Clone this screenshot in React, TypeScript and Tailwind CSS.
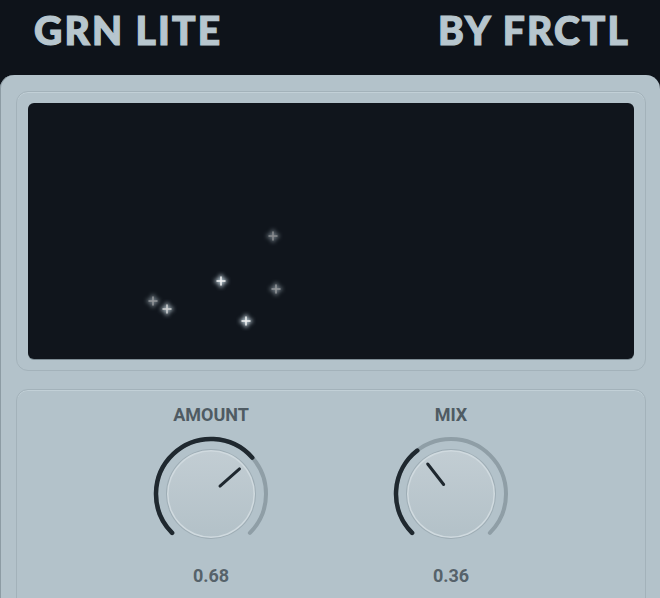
import React from "react";

const polar = (cx: number, cy: number, r: number, deg: number) => {
  const a = (deg * Math.PI) / 180;
  return [cx + r * Math.sin(a), cy - r * Math.cos(a)];
};

const arcPath = (cx: number, cy: number, r: number, from: number, to: number) => {
  const [x1, y1] = polar(cx, cy, r, from);
  const [x2, y2] = polar(cx, cy, r, to);
  const large = to - from > 180 ? 1 : 0;
  return `M ${x1} ${y1} A ${r} ${r} 0 ${large} 1 ${x2} ${y2}`;
};

function Knob({ label, value, id }: { label: string; value: number; id: string }) {
  const cx = 60;
  const cy = 60;
  const ang = -135 + value * 270;
  const [px1, py1] = polar(cx, cy, 12, ang);
  const [px2, py2] = polar(cx, cy, 38, ang);
  return (
    <div className="w-[240px] flex flex-col items-center">
      <div
        className="text-[18px] leading-[20px] font-bold text-[#4f5b63]"
        style={{ fontFamily: "Roboto, 'Liberation Sans', sans-serif" }}
      >
        {label}
      </div>
      <svg width="120" height="120" viewBox="0 0 120 120" className="mt-[9px]">
        <defs>
          <linearGradient id={`kg-${id}`} x1="0" y1="0" x2="0" y2="1">
            <stop offset="0" stopColor="#c2cdd3" />
            <stop offset="1" stopColor="#b3c1c8" />
          </linearGradient>
        </defs>
        <path d={arcPath(cx, cy, 55, -135, 135)} fill="none" stroke="#8f9ea6" strokeWidth="4" strokeLinecap="round" />
        <path d={arcPath(cx, cy, 55, -135, ang)} fill="none" stroke="#1f282f" strokeWidth="4.5" strokeLinecap="round" />
        <circle cx={cx} cy={cy} r="45" fill="#9eadb5" />
        <circle cx={cx} cy={cy} r="44" fill="#d0dadf" />
        <circle cx={cx} cy={cy} r="42.5" fill={`url(#kg-${id})`} />
        <line x1={px1} y1={py1} x2={px2} y2={py2} stroke="#1f282f" strokeWidth="3" strokeLinecap="round" />
      </svg>
      <div
        className="mt-[12px] text-[18px] leading-[20px] font-bold text-[#56626a]"
        style={{ fontFamily: "Roboto, 'Liberation Sans', sans-serif" }}
      >
        {value.toFixed(2)}
      </div>
    </div>
  );
}

const stars = [
  { x: 125, y: 198, o: 0.55 },
  { x: 139, y: 206, o: 0.8 },
  { x: 193, y: 178, o: 0.95 },
  { x: 245, y: 133, o: 0.5 },
  { x: 248, y: 186, o: 0.55 },
  { x: 218, y: 218, o: 0.95 },
];

export default function App() {
  return (
    <div className="w-[660px] h-[598px] overflow-hidden bg-[#0e131a] flex flex-col">
      <div
        className="h-[75px] shrink-0 pb-[14px] flex items-center justify-between pl-[34px] pr-[30px] text-[#b7c6ce] text-[39px] font-black tracking-[0.055em] [-webkit-text-stroke:1.2px_#b7c6ce]"
        style={{ fontFamily: "Lato, 'Open Sans', sans-serif" }}
      >
        <span>GRN LITE</span>
        <span>BY FRCTL</span>
      </div>
      <div className="flex-1 rounded-t-[14px] bg-[#b3c2ca] pl-[16px] pr-[14px] pt-[16px] shadow-[inset_1px_0_0_#8d9ca4]">
        <div className="h-[280px] rounded-[12px] border border-[#a3b2ba] shadow-[inset_0_1px_0_#c2d0d7] p-[11px]">
          <div className="relative h-full rounded-[6px] bg-[#10151c] shadow-[0_1px_0_#7d8c94]">
            <svg className="absolute inset-0" width="606" height="255">
              <defs>
                <filter id="glow" x="-100%" y="-100%" width="300%" height="300%">
                  <feGaussianBlur stdDeviation="2" />
                </filter>
              </defs>
              {stars.map((s, i) => (
                <g key={i} opacity={s.o}>
                  <g filter="url(#glow)" stroke="#cfe0ea" strokeWidth="3.5">
                    <line x1={s.x - 6} y1={s.y} x2={s.x + 6} y2={s.y} />
                    <line x1={s.x} y1={s.y - 6} x2={s.x} y2={s.y + 6} />
                  </g>
                  <g stroke="#ffffff" strokeWidth="1.5">
                    <line x1={s.x - 4.5} y1={s.y} x2={s.x + 4.5} y2={s.y} />
                    <line x1={s.x} y1={s.y - 4.5} x2={s.x} y2={s.y + 4.5} />
                  </g>
                </g>
              ))}
            </svg>
          </div>
        </div>
        <div className="mt-[18px] h-[260px] rounded-[12px] border border-[#a3b2ba] shadow-[inset_0_1px_0_#c2d0d7] pt-[15px] flex justify-center">
          <Knob label="AMOUNT" value={0.68} id="a" />
          <Knob label="MIX" value={0.36} id="b" />
        </div>
      </div>
    </div>
  );
}
